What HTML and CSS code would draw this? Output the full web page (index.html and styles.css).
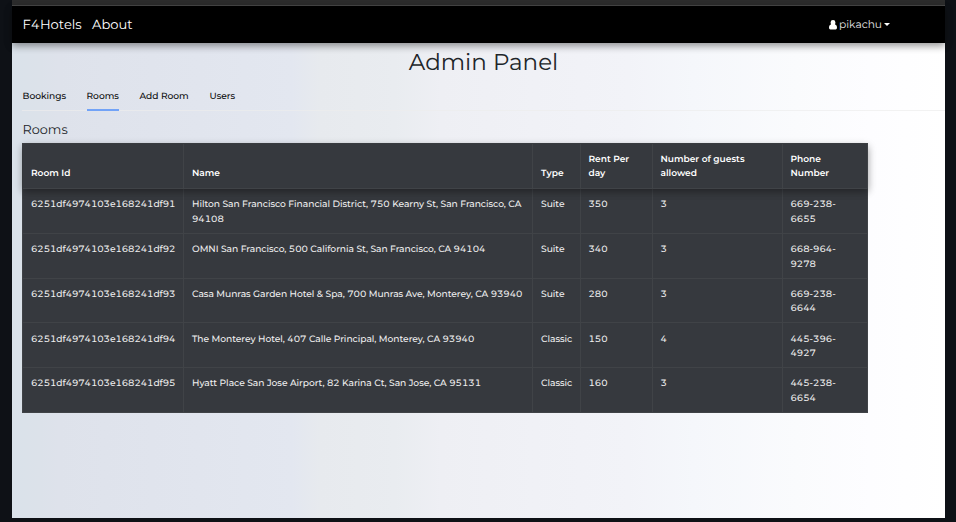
FILE: index.html
```html
<!DOCTYPE html>
<html lang="en">
<head>
<meta charset="utf-8">
<title>F4Hotels</title>
<link rel="stylesheet" href="styles.css">
</head>
<body>
<div class="window">
  <div class="toolbar-edge"></div>
  <nav class="navbar">
    <div class="nav-links"><a class="brand">F4Hotels</a><a class="about">About</a></div>
    <a class="user">
      <svg class="user-icon" viewBox="0 0 8 10"><path d="M4 0a2.4 2.4 0 0 1 2.4 2.5Q6.4 3.7 5.9 4.4Q8 4.7 8 7.8Q8 9.4 6.6 9.4H1.4Q0 9.4 0 7.8Q0 4.7 2.1 4.4Q1.6 3.7 1.6 2.5A2.4 2.4 0 0 1 4 0Z" fill="currentColor"/></svg>
      <span class="user-name">pikachu</span><span class="caret"></span>
    </a>
  </nav>
  <main class="page">
    <h1>Admin Panel</h1>
    <div class="tabs"><a class="t-bookings">Bookings</a><a class="t-rooms active">Rooms</a><a class="t-add">Add Room</a><a class="t-users">Users</a></div>
    <h2>Rooms</h2>
    <table>
      <colgroup><col class="c-id"><col class="c-name"><col class="c-type"><col class="c-rent"><col class="c-guests"><col class="c-phone"></colgroup>
      <thead><tr><th>Room Id</th><th>Name</th><th>Type</th><th>Rent Per<br>day</th><th>Number of guests<br>allowed</th><th>Phone<br>Number</th></tr></thead>
      <tbody>
        <tr><td class="id">6251df4974103e168241df91</td><td>Hilton San Francisco Financial District, 750 Kearny St, San Francisco, CA<br>94108</td><td>Suite</td><td>350</td><td>3</td><td>669-238-<br>6655</td></tr>
        <tr><td class="id">6251df4974103e168241df92</td><td>OMNI San Francisco, 500 California St, San Francisco, CA 94104</td><td>Suite</td><td>340</td><td>3</td><td>668-964-<br>9278</td></tr>
        <tr><td class="id">6251df4974103e168241df93</td><td>Casa Munras Garden Hotel &amp; Spa, 700 Munras Ave, Monterey, CA 93940</td><td>Suite</td><td>280</td><td>3</td><td>669-238-<br>6644</td></tr>
        <tr><td class="id">6251df4974103e168241df94</td><td>The Monterey Hotel, 407 Calle Principal, Monterey, CA 93940</td><td>Classic</td><td>150</td><td>4</td><td>445-396-<br>4927</td></tr>
        <tr><td class="id">6251df4974103e168241df95</td><td>Hyatt Place San Jose Airport, 82 Karina Ct, San Jose, CA 95131</td><td>Classic</td><td>160</td><td>3</td><td>445-238-<br>6654</td></tr>
      </tbody>
    </table>
  </main>
</div>
</body>
</html>
```
FILE: styles.css
```css
* { box-sizing: border-box; }
body {
  margin: 0;
  height: 522px;
  padding: 0 11px 4px 12px;
  overflow: hidden;
  background: #0e1116;
  font-family: Montserrat, Inter, sans-serif;
  font-variant-numeric: tabular-nums;
  text-rendering: geometricPrecision;
  color: #212529;
}
.window { height: 518px; display: flex; flex-direction: column; }
.toolbar-edge { height: 6px; flex: none; background: #2d2d2d; border-bottom: 1px solid #4a4a4a; }
.navbar {
  height: 37px;
  flex: none;
  position: relative;
  z-index: 1;
  display: flex;
  justify-content: space-between;
  align-items: center;
  padding: 0 55px 0 10.5px;
  background: #000;
  color: #fff;
  box-shadow: 0 3px 7px rgba(0, 0, 0, .3), 0 2px 9px rgba(0, 0, 0, .16);
}
.nav-links { display: flex; gap: 10px; font-size: 13.1px; line-height: 20px; }
.brand { width: 59.5px; }
.user { display: flex; align-items: center; font-size: 10.7px; line-height: 16px; color: #e8e8e8; }
.user-icon { width: 8px; height: 10px; margin-right: 2px; color: #fff; }
.user-name { width: 43px; }
.caret { margin: 0 0 1px 2px; border: 3px solid transparent; border-top-color: #fff; border-bottom: 0; }
.page {
  flex: 1;
  padding: 4px 0 0 10px;
  background: linear-gradient(90deg, #dae2ea 0%, #dce2ea 3%, #dee2eb 5%, #e3e7f0 30%, #e7eaee 33%, #e9ecf0 41%, #eeeff4 46%, #f2f3f8 66%, #f5f7fb 73%, #fafbfd 84%, #fdfdff 92%, #fff 100%);
}
h1 { margin: 0; height: 30px; text-align: center; font-size: 23px; line-height: 31px; font-weight: 400; }
.tabs {
  height: 34px;
  display: flex;
  gap: 21px;
  padding-left: .5px;
  border-bottom: 1px solid rgba(237, 237, 237, .7);
  font-size: 9.1px;
  font-weight: 500;
  line-height: 39px;
  white-space: nowrap;
  color: #0a0a0a;
}
.tabs a { height: 34px; }
.t-bookings { width: 43px; }
.t-rooms { width: 32px; }
.t-add { width: 49px; }
.active { border-bottom: 2px solid #72a3f7; }
h2 { margin: 10px 0 6px .5px; font-size: 12.8px; line-height: 19px; height: 16px; font-weight: 400; }
table {
  width: 845px;
  table-layout: fixed;
  border-collapse: collapse;
  background: #36393e;
  color: #eee;
  font-size: 9.15px;
  font-weight: 500;
  line-height: 14.4px;
  border: 1px solid #7c8187;
}
.c-id { width: 161px; }
.c-name { width: 349px; }
.c-type { width: 47.5px; }
.c-rent { width: 72px; }
.c-guests { width: 130px; }
.c-phone { width: 85.5px; }
thead { position: relative; box-shadow: 0 3px 7px rgba(0, 0, 0, .22), 0 2px 9px rgba(0, 0, 0, .18); }
th, td { border: 1px solid #404347; text-align: left; padding: 0 8px; white-space: nowrap; }
th { height: 45px; vertical-align: bottom; padding-bottom: 6.6px; font-size: 9.05px; font-weight: 600; color: #fff; }
td { height: 44.8px; vertical-align: top; padding-top: 9.3px; letter-spacing: -.02px; }
.id { letter-spacing: -.06px; }
```
